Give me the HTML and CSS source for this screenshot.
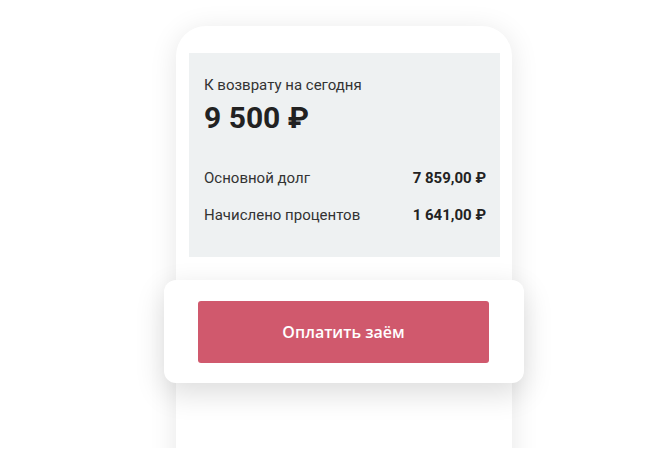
FILE: index.html
```html
<!DOCTYPE html>
<html lang="ru">
<head>
<meta charset="utf-8">
<link rel="stylesheet" href="styles.css">
</head>
<body>
<div class="stage">
  <div class="phone">
    <div class="summary">
      <div class="label">К возврату на сегодня</div>
      <div class="amount">9 500 ₽</div>
      <div class="rows">
        <div class="row"><span>Основной долг</span><b>7 859,00 ₽</b></div>
        <div class="row"><span>Начислено процентов</span><b>1 641,00 ₽</b></div>
      </div>
    </div>
    <div class="paycard">
      <button class="paybtn">Оплатить заём</button>
    </div>
  </div>
</div>
</body>
</html>
```
FILE: styles.css
```css
html, body {
  margin: 0;
  padding: 0;
  background: #fff;
}
.stage {
  height: 448px;
  overflow: hidden;
  padding: 26px 0 0 176px;
  box-sizing: border-box;
}
.phone {
  position: relative;
  width: 336px;
  height: 520px;
  box-sizing: border-box;
  background: #fff;
  border-radius: 30px 30px 0 0;
  box-shadow: 0 4px 28px rgba(0, 0, 0, 0.1);
  padding: 27px 12px 0 13px;
}
.summary {
  height: 204px;
  box-sizing: border-box;
  background: #eef1f2;
  padding: 22px 14px 0 15px;
  font-family: Roboto, "Liberation Sans", sans-serif;
  color: #333;
}
.label {
  font-size: 15px;
  line-height: 20px;
}
.amount {
  margin-top: 5px;
  font-size: 30px;
  line-height: 36px;
  font-weight: 700;
  color: #222;
}
.rows {
  margin-top: 32px;
  display: flex;
  flex-direction: column;
  gap: 17px;
}
.row {
  display: flex;
  justify-content: space-between;
  font-size: 15px;
  line-height: 20px;
}
.row b {
  font-weight: 700;
  color: #222;
}
.paycard {
  position: absolute;
  left: -12px;
  top: 254px;
  width: 360px;
  height: 103px;
  box-sizing: border-box;
  background: #fff;
  border-radius: 12px;
  box-shadow: 0 10px 30px rgba(0, 0, 0, 0.14);
  padding: 21px 35px 0 34px;
}
.paybtn {
  display: block;
  width: 291px;
  height: 62px;
  border: 0;
  border-radius: 3px;
  background: #d0596d;
  color: #fff;
  font-family: "Open Sans", "Noto Sans", sans-serif;
  font-size: 16px;
  font-weight: 600;
  padding: 0;
}
```
